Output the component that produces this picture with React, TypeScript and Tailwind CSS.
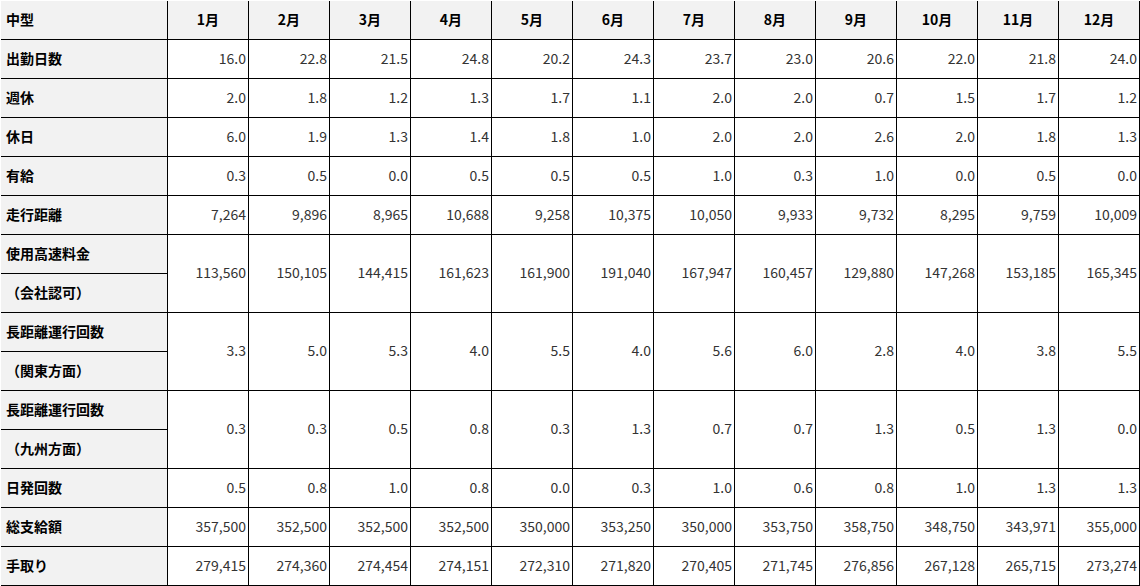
const months = ["1月", "2月", "3月", "4月", "5月", "6月", "7月", "8月", "9月", "10月", "11月", "12月"];

type Row = { label: string[]; values: string[] };

const rows: Row[] = [
  { label: ["出勤日数"], values: ["16.0", "22.8", "21.5", "24.8", "20.2", "24.3", "23.7", "23.0", "20.6", "22.0", "21.8", "24.0"] },
  { label: ["週休"], values: ["2.0", "1.8", "1.2", "1.3", "1.7", "1.1", "2.0", "2.0", "0.7", "1.5", "1.7", "1.2"] },
  { label: ["休日"], values: ["6.0", "1.9", "1.3", "1.4", "1.8", "1.0", "2.0", "2.0", "2.6", "2.0", "1.8", "1.3"] },
  { label: ["有給"], values: ["0.3", "0.5", "0.0", "0.5", "0.5", "0.5", "1.0", "0.3", "1.0", "0.0", "0.5", "0.0"] },
  { label: ["走行距離"], values: ["7,264", "9,896", "8,965", "10,688", "9,258", "10,375", "10,050", "9,933", "9,732", "8,295", "9,759", "10,009"] },
  { label: ["使用高速料金", "（会社認可）"], values: ["113,560", "150,105", "144,415", "161,623", "161,900", "191,040", "167,947", "160,457", "129,880", "147,268", "153,185", "165,345"] },
  { label: ["長距離運行回数", "（関東方面）"], values: ["3.3", "5.0", "5.3", "4.0", "5.5", "4.0", "5.6", "6.0", "2.8", "4.0", "3.8", "5.5"] },
  { label: ["長距離運行回数", "（九州方面）"], values: ["0.3", "0.3", "0.5", "0.8", "0.3", "1.3", "0.7", "0.7", "1.3", "0.5", "1.3", "0.0"] },
  { label: ["日発回数"], values: ["0.5", "0.8", "1.0", "0.8", "0.0", "0.3", "1.0", "0.6", "0.8", "1.0", "1.3", "1.3"] },
  { label: ["総支給額"], values: ["357,500", "352,500", "352,500", "352,500", "350,000", "353,250", "350,000", "353,750", "358,750", "348,750", "343,971", "355,000"] },
  { label: ["手取り"], values: ["279,415", "274,360", "274,454", "274,151", "272,310", "271,820", "270,405", "271,745", "276,856", "267,128", "265,715", "273,274"] },
];

export default function App() {
  return (
    <div className="w-[1140px] h-[586px] bg-white font-['Noto_Sans_CJK_JP','Noto_Sans',sans-serif] text-[14px]">
      <div className="border-l border-t border-white">
        <div className="grid grid-cols-[166px_repeat(12,80px)] grid-rows-[repeat(15,38px)] gap-px bg-black pr-px pb-px">
          <div className="bg-[#f2f2f2] flex items-center pl-[5px] pb-[2px] font-bold text-black">中型</div>
          {months.map((m) => (
            <div key={m} className="bg-[#f2f2f2] flex items-center justify-center pb-[2px] font-bold text-black">
              {m}
            </div>
          ))}

          {rows.map((row, i) => {
            const tall = row.label.length > 1;
            return [
              <div key={`l${i}`} className="col-start-1 bg-[#f2f2f2] flex items-center pl-[5px] pb-[2px] font-bold text-black whitespace-nowrap">
                {row.label[0]}
              </div>,
              ...row.values.map((v, j) => (
                <div
                  key={`v${i}-${j}`}
                  className={`bg-white flex items-center justify-end pr-[2px] pb-[2px] text-[#333333] ${tall ? "row-span-2" : ""}`}
                >
                  {v}
                </div>
              )),
              tall ? (
                <div key={`s${i}`} className="col-start-1 bg-[#f2f2f2] flex items-center pl-[5px] pb-[2px] font-bold text-black whitespace-nowrap">
                  {row.label[1]}
                </div>
              ) : null,
            ];
          })}
        </div>
      </div>
    </div>
  );
}
